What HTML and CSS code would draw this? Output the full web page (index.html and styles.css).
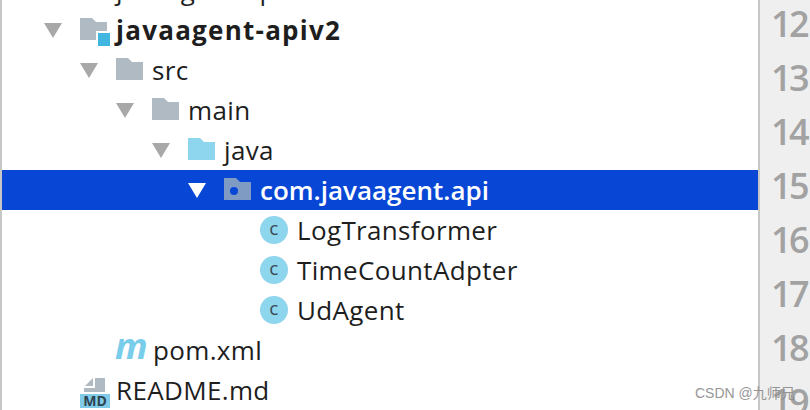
FILE: index.html
```html
<!DOCTYPE html>
<html lang="zh">
<head>
  <meta charset="UTF-8">
  <meta name="viewport" content="width=device-width, initial-scale=1.0">
  <title>javaagent-apiv2</title>
  <link rel="stylesheet" href="styles.css">
</head>
<body>
  <div class="editor">
    <!-- project tree -->
    <div class="tree">
      <div class="row depth-0 clipped"><span class="arrow"></span><span class="icon"></span><span class="name">javaagent-ap</span></div>

      <div class="row depth-0">
        <svg class="arrow" viewBox="0 0 18 15"><path d="M0 0h18L9 15z"/></svg>
        <svg class="icon project" viewBox="0 0 30 30"><path class="grey" d="M1 3h12l4 4h11v18H1z"/><path class="white" d="M17 16h15v16H17z"/><path class="sky" d="M19 18h12v13H19z"/></svg>
        <span class="name bold">javaagent-apiv2</span>
      </div>
      <div class="row depth-1">
        <svg class="arrow" viewBox="0 0 18 15"><path d="M0 0h18L9 15z"/></svg>
        <svg class="icon" viewBox="0 0 30 30"><path class="grey" d="M1 3h12l4 4h11v18H1z"/></svg>
        <span class="name">src</span>
      </div>
      <div class="row depth-2">
        <svg class="arrow" viewBox="0 0 18 15"><path d="M0 0h18L9 15z"/></svg>
        <svg class="icon" viewBox="0 0 30 30"><path class="grey" d="M1 3h12l4 4h11v18H1z"/></svg>
        <span class="name">main</span>
      </div>
      <div class="row depth-3">
        <svg class="arrow" viewBox="0 0 18 15"><path d="M0 0h18L9 15z"/></svg>
        <svg class="icon" viewBox="0 0 30 30"><path class="sky-light" d="M1 3h12l4 4h11v18H1z"/></svg>
        <span class="name">java</span>
      </div>
      <div class="row depth-4 selected">
        <svg class="arrow" viewBox="0 0 18 15"><path d="M0 0h18L9 15z"/></svg>
        <svg class="icon" viewBox="0 0 30 30"><path class="pkg" d="M1 3h12l4 4h11v18H1z"/><circle class="pkg-dot" cx="11" cy="16" r="4"/></svg>
        <span class="name">com.javaagent.api</span>
      </div>
      <div class="row depth-5">
        <span class="class-icon">c</span>
        <span class="name">LogTransformer</span>
      </div>
      <div class="row depth-5">
        <span class="class-icon">c</span>
        <span class="name">TimeCountAdpter</span>
      </div>
      <div class="row depth-5">
        <span class="class-icon">c</span>
        <span class="name">UdAgent</span>
      </div>
      <div class="row depth-1">
        <span class="arrow"></span>
        <span class="maven-icon">m</span>
        <span class="name">pom.xml</span>
      </div>
      <div class="row depth-1">
        <span class="md-icon">
          <svg class="md-page" viewBox="0 0 21 14"><path class="grey" d="M11 0h10v14H0v-4h11zM9 0v8H1z"/></svg>
          <span class="md-badge">MD</span>
        </span>
        <span class="name">README.md</span>
      </div>
    </div>

    <!-- line numbers -->
    <div class="gutter">
      <span>12</span>
      <span>13</span>
      <span>14</span>
      <span>15</span>
      <span>16</span>
      <span>17</span>
      <span>18</span>
      <span>19</span>
    </div>
  </div>

  <div class="watermark">CSDN @九师兄</div>
</body>
</html>
```

FILE: styles.css
```css
html, body {
  margin: 0;
  height: 100%;
}
body {
  background-color: #fff;
  font-family: "Open Sans", "Noto Sans CJK SC", sans-serif;
  overflow: hidden;
  position: relative;
}
.editor {
  display: flex;
  height: 410px;
  overflow: hidden;
}

/* tree */
.tree {
  width: 756px;
  border-left: 2px solid #c6c6c6;
  margin-top: -30px;
  flex: none;
}
.row {
  display: flex;
  align-items: center;
  height: 40px;
  font-size: 26px;
  letter-spacing: 0.35px;
  color: #1e1e1e;
  white-space: nowrap;
}
.depth-0 { padding-left: 42px; }
.depth-1 { padding-left: 78px; }
.depth-2 { padding-left: 114px; }
.depth-3 { padding-left: 150px; }
.depth-4 { padding-left: 186px; }
.depth-5 { padding-left: 258px; }

.arrow {
  width: 18px;
  height: 15px;
  flex: none;
  margin-right: 17px;
  fill: #a8a8a8;
}
.icon {
  width: 30px;
  height: 30px;
  flex: none;
  margin-right: 7px;
}
.project {
  overflow: visible;
}
.grey { fill: #afbac2; }
.sky { fill: #40b6e0; }
.white { fill: #fff; }
.sky-light { fill: #8ed5ee; }
.pkg { fill: #7f9ac3; }
.pkg-dot { fill: #0847d6; }

.name {
  line-height: 40px;
}
.bold {
  font-weight: 700;
  letter-spacing: 1.25px;
}
.selected {
  background-color: #0847d6;
  color: #fff;
  font-weight: 600;
  letter-spacing: 0;
}
.selected .arrow {
  fill: #fff;
}

.class-icon {
  width: 28px;
  height: 28px;
  border-radius: 50%;
  background-color: #8ed5ee;
  color: #3c4a52;
  font-size: 19px;
  line-height: 25px;
  text-align: center;
  flex: none;
  margin-right: 9px;
}
.maven-icon {
  width: 30px;
  flex: none;
  margin-right: 8px;
  color: #78cdeb;
  font-size: 36px;
  font-weight: 700;
  font-style: italic;
  line-height: 32px;
  margin-top: -8px;
}
.md-icon {
  display: flex;
  flex-direction: column;
  align-items: flex-end;
  width: 30px;
  flex: none;
  margin-right: 6px;
  margin-top: 6px;
}
.md-page {
  width: 21px;
  height: 14px;
  margin-right: 5px;
  margin-bottom: 2px;
}
.md-badge {
  width: 30px;
  height: 14px;
  background-color: #7fcbe8;
  color: #2f4450;
  font-size: 14px;
  font-weight: 700;
  line-height: 14px;
  letter-spacing: 0;
  text-align: center;
}

/* line numbers */
.gutter {
  flex: 1;
  border-left: 2px solid #c6c6c6;
  background-color: #efefef;
  color: #a2a2a2;
  font-size: 36px;
  font-weight: 600;
  letter-spacing: -2.5px;
  line-height: 54px;
  display: flex;
  flex-direction: column;
  padding-left: 11px;
}
.gutter span {
  display: block;
  height: 54px;
  margin-top: -3px;
  margin-bottom: 3px;
}

.watermark {
  position: absolute;
  left: 695px;
  top: 384px;
  color: #8c8c8c;
  font-family: "Liberation Sans", "Noto Sans CJK SC", sans-serif;
  font-size: 14px;
  line-height: 18px;
  opacity: 0.9;
}
```
